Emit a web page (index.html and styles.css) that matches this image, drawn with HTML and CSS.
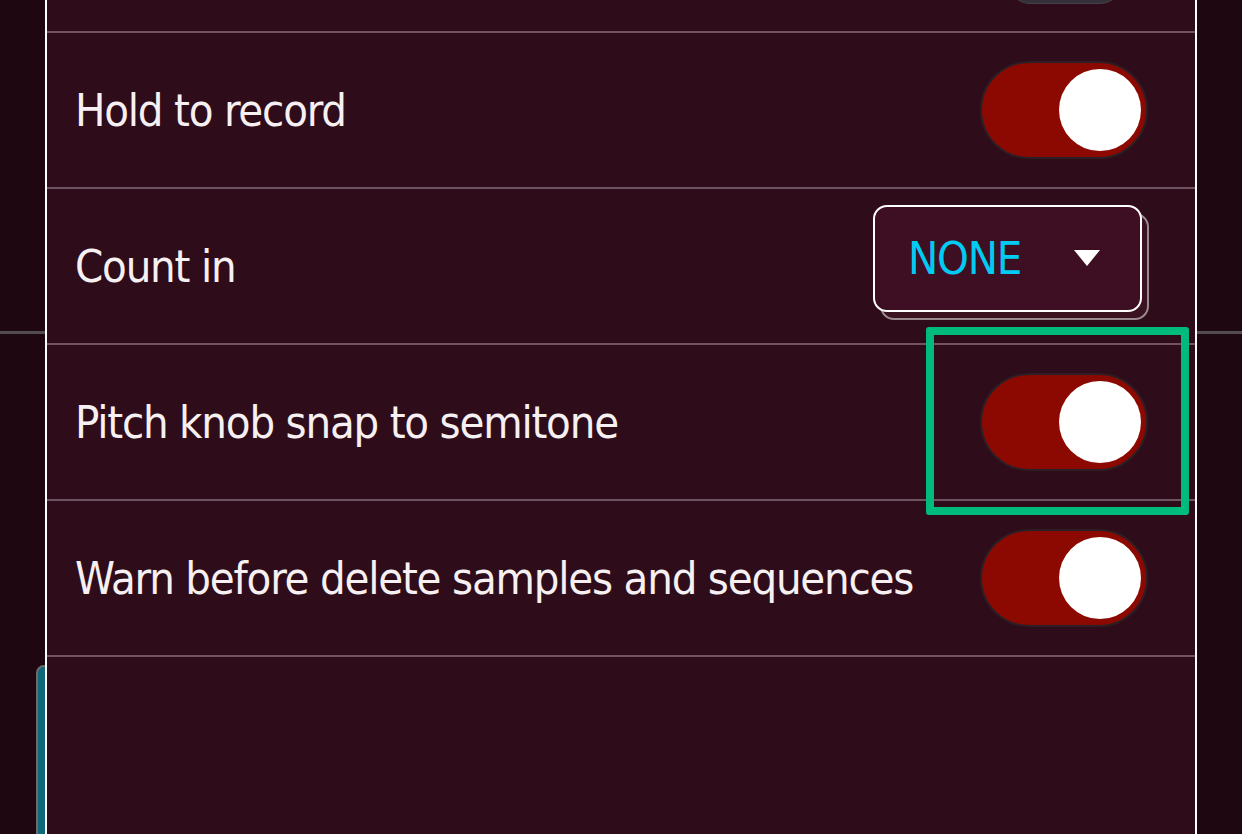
FILE: index.html
```html
<!DOCTYPE html>
<html>
<head>
<meta charset="utf-8">
<link rel="stylesheet" href="styles.css">
</head>
<body>
<div class="bg-line"></div>
<div class="bg-card"></div>
<div class="panel">
  <div class="top-row">
    <div class="top-peek"></div>
  </div>
  <div class="row">
    <span class="label">Hold to record</span>
    <div class="toggle on"><div class="knob"></div></div>
  </div>
  <div class="row">
    <span class="label">Count in</span>
    <div class="dropdown">
      <div class="dropdown-box">
        <span class="dropdown-value">NONE</span>
        <svg class="caret" width="26" height="16" viewBox="0 0 26 16"><polygon points="0,0 26,0 13,16" fill="#ffffff"/></svg>
      </div>
    </div>
  </div>
  <div class="row">
    <span class="label">Pitch knob snap to semitone</span>
    <div class="toggle on"><div class="knob"></div></div>
  </div>
  <div class="row">
    <span class="label">Warn before delete samples and sequences</span>
    <div class="toggle on"><div class="knob"></div></div>
  </div>
  <div class="bottom-space"></div>
</div>
<div class="highlight"></div>
</body>
</html>
```

FILE: styles.css
```css
html, body {
  margin: 0;
  padding: 0;
}
body {
  width: 1242px;
  height: 834px;
  overflow: hidden;
  background: #1e0710;
  position: relative;
  font-family: "DejaVu Sans Condensed", "Liberation Sans", sans-serif;
}
.bg-line {
  position: absolute;
  left: 0;
  top: 331px;
  width: 1242px;
  height: 3px;
  background: #544b51;
}
.bg-card {
  position: absolute;
  left: 36px;
  top: 665px;
  width: 20px;
  height: 200px;
  background: #0f6877;
  border: 2px solid #6d6a6e;
  border-radius: 8px 0 0 0;
  box-sizing: border-box;
}
.panel {
  position: relative;
  margin-left: 45px;
  width: 1152px;
  height: 834px;
  box-sizing: border-box;
  border-left: 2px solid #ffffff;
  border-right: 2px solid #ffffff;
  background: #2e0c1a;
  display: flex;
  flex-direction: column;
}
.top-row {
  height: 31px;
  border-bottom: 2px solid #6f5363;
  position: relative;
  flex: none;
}
.top-peek {
  position: absolute;
  left: 961px;
  top: -40px;
  width: 114px;
  height: 44px;
  border-radius: 22px;
  background: #35303a;
  border: 1px solid #45404a;
  box-sizing: border-box;
}
.row {
  height: 154px;
  border-bottom: 2px solid #6f5363;
  display: flex;
  align-items: center;
  justify-content: space-between;
  padding: 0 47px 0 28px;
  flex: none;
}
.label {
  color: #f6f0f2;
  font-size: 45px;
  letter-spacing: -1.2px;
  line-height: 1;
  white-space: nowrap;
}
.toggle {
  flex: none;
  width: 168px;
  height: 98px;
  border-radius: 49px;
  box-sizing: border-box;
  border: 2px solid #2b1f25;
  background: #8c0902;
  display: flex;
  align-items: center;
  justify-content: flex-end;
  padding-right: 5px;
}
.knob {
  width: 82px;
  height: 82px;
  border-radius: 50%;
  background: #ffffff;
}
.dropdown {
  flex: none;
  position: relative;
  width: 276px;
  height: 115px;
  margin-right: -1px;
  margin-top: -8px;
}
.dropdown::before {
  content: "";
  position: absolute;
  left: 7px;
  top: 8px;
  width: 269px;
  height: 107px;
  box-sizing: border-box;
  border: 2px solid #9a8a90;
  border-radius: 14px;
  background: #3a1220;
}
.dropdown-box {
  position: relative;
  width: 269px;
  height: 107px;
  box-sizing: border-box;
  border: 2px solid #ffffff;
  border-radius: 14px;
  background: #3e0f22;
  display: flex;
  align-items: center;
  justify-content: space-between;
  padding: 0 40px 0 33px;
}
.dropdown-value {
  color: #00cbf3;
  font-size: 45px;
  letter-spacing: -1.2px;
  line-height: 1;
}
.caret {
  display: block;
}
.bottom-space {
  flex: 1;
}
.highlight {
  position: absolute;
  left: 926px;
  top: 327px;
  width: 263px;
  height: 188px;
  box-sizing: border-box;
  border: 8px solid #00bb7c;
  border-radius: 3px;
}
```
